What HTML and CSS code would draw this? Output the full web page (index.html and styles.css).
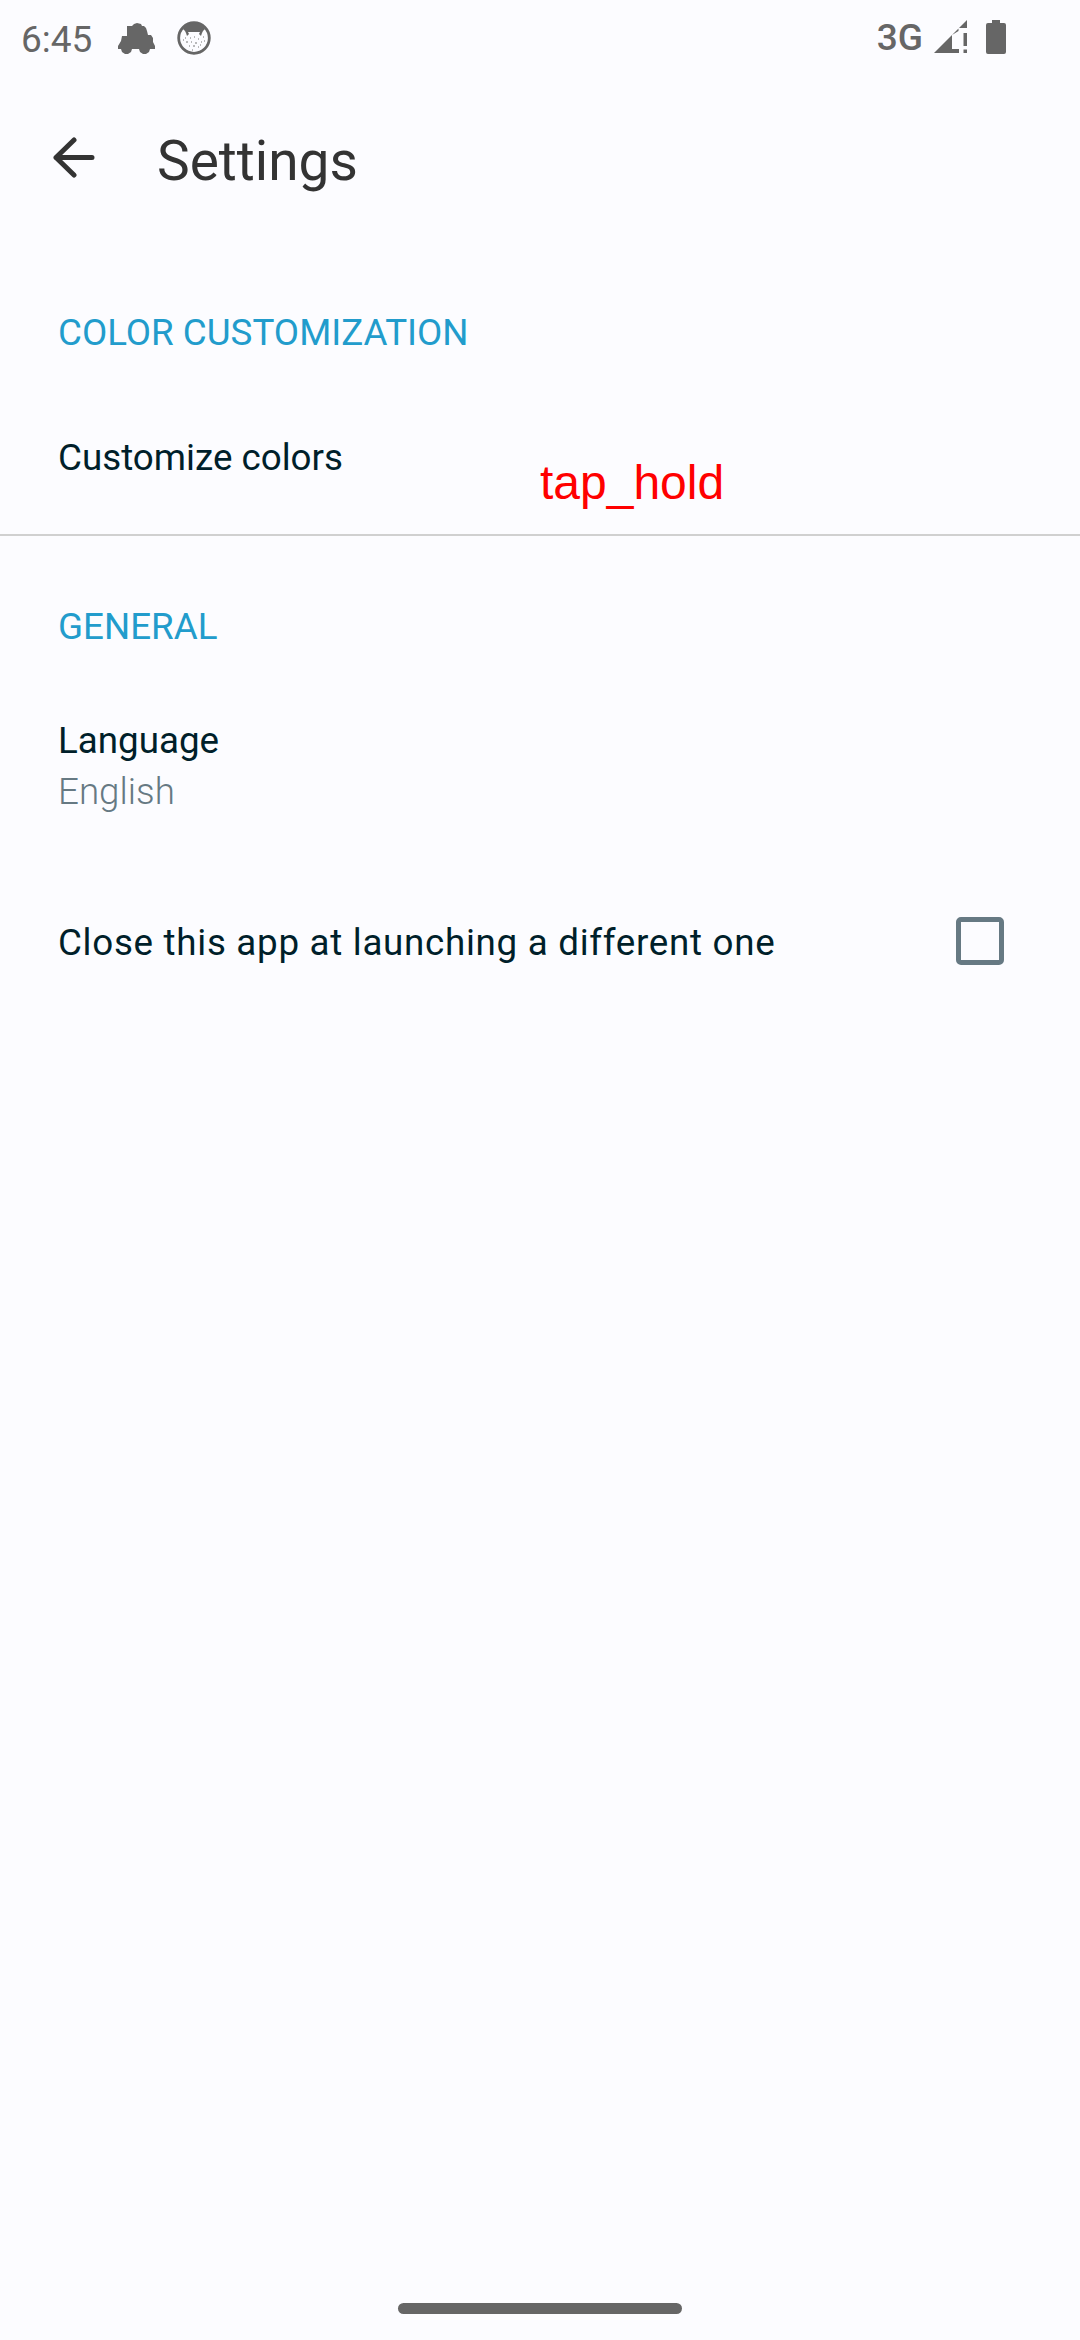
FILE: index.html
```html
<!DOCTYPE html>
<html lang="en">
<head>
<meta charset="utf-8">
<title>Settings</title>
<link rel="stylesheet" href="styles.css">
</head>
<body>
<div class="screen">
  <header class="status">
    <span class="clock">6:45</span>
    <svg class="car" width="38" height="31" viewBox="0 0 38 31"><path d="M9 3h5l2-2 3-1 4 1 1 2h2l2 2 1 3 1 4h3l2 3v4l2 4v3h-5l-1 3-3 2h-3l-3-2-1-3h-7l-1 3-3 2H7l-3-2-1-3H0v-3l3-5 1-5h5z"/></svg>
    <svg class="face" width="34" height="34" viewBox="0 0 34 34"><circle class="ring" cx="17" cy="17" r="15.3"/><path d="M6 8C9 3 13 2 17 2s8 1 11 6l-2 2-1 2-1 3-2-2 1-2H11l1 2-2 2-1-3-1-2z"/><path class="dots" d="M8 17h1M13 17h1M17 16h1M21 18h1M26 16h1M9 21h2M14 21h1M18 22h2M24 21h1M12 25h1M16 25h2M21 26h1M15 29h1M6 19h1M23 24h1M27 20h1"/></svg>
    <span class="network">3G</span>
    <svg class="signal" width="33" height="33" viewBox="0 0 33 33"><path d="M33 0v8h-8zM0 33l24.5-24.5V11L18 15v14h7v4zM29.5 13h3.5v13h-3.5zM29.5 29.5h3.5V33h-3.5z"/></svg>
    <svg class="battery" width="20" height="34" viewBox="0 0 20 34"><path d="M6 0h8v3h4q2 0 2 2v27q0 2-2 2H2q-2 0-2-2V5q0-2 2-2h4z"/></svg>
  </header>
  <nav class="toolbar">
    <svg class="back" width="42" height="42" viewBox="0 0 42 42"><path d="M21 3L3 20.5 21 38M3 20.5h36"/></svg>
    <h1 class="title">Settings</h1>
  </nav>
  <main>
    <section class="group colors">
      <h2 class="heading">COLOR CUSTOMIZATION</h2>
      <div class="row customize"><span class="label">Customize colors</span><span class="gesture">tap_hold</span></div>
    </section>
    <section class="group general">
      <h2 class="heading">GENERAL</h2>
      <div class="row language">
        <div class="label">Language</div>
        <div class="value">English</div>
      </div>
      <div class="row toggle"><span class="long">Close this app at launching a different one</span><span class="checkbox"></span></div>
    </section>
  </main>
  <footer class="home"></footer>
</div>
</body>
</html>
```
FILE: styles.css
```css
body {
  margin: 0;
  background: #fcfcff;
  font-family: Roboto, sans-serif;
}

.screen {
  width: 1080px;
  height: 2340px;
  display: flex;
  flex-direction: column;
}

.status {
  height: 80px;
  box-sizing: border-box;
  padding: 0 74px 0 21px;
  display: flex;
  align-items: flex-start;
  color: #666;
  fill: #666;
}

.clock {
  width: 97px;
  padding-top: 18px;
  font-size: 37px;
  line-height: 43px;
}

.car { margin-top: 23px; }

.face { margin: 21px 0 0 21px; }

.ring { fill: none; stroke: #666; stroke-width: 2.8; }

.dots { fill: none; stroke: #777; stroke-width: 1; }

.network {
  margin-left: auto;
  padding-top: 16px;
  font-size: 37px;
  font-weight: 500;
  line-height: 43px;
}

.signal { margin: 20px 19px 0 11px; }

.battery { margin-top: 20px; }

.toolbar {
  height: 160px;
  display: flex;
  align-items: center;
  padding-left: 53px;
}

.back {
  margin-bottom: 4px;
  fill: none;
  stroke: #333;
  stroke-width: 5;
  stroke-linecap: round;
  stroke-linejoin: round;
}

.title {
  margin: 2px 0 0 62px;
  font-size: 55px;
  font-weight: 400;
  line-height: 64px;
  color: #333;
}

.group { padding: 0 58px; }

.colors {
  height: 296px;
  box-sizing: border-box;
  padding-top: 71px;
  border-bottom: 2px solid #d0d0d0;
}

.general { padding-top: 69px; }

.heading {
  margin: 0;
  font-size: 36.75px;
  font-weight: 400;
  line-height: 43px;
  color: #229ccc;
}

.row { color: #001f2a; font-size: 36.75px; line-height: 43px; }

.customize { display: flex; padding-top: 82px; }

.customize .label { width: 482px; }

.gesture {
  margin-top: 25px;
  font-family: "Liberation Sans", sans-serif;
  font-size: 48px;
  color: #f00;
}

.language { padding-top: 71px; }

.value { margin-top: 8px; font-weight: 300; color: #667983; }

.toggle {
  display: flex;
  justify-content: space-between;
  align-items: center;
  padding: 104px 18px 0 0;
}

.long { margin-top: 3px; letter-spacing: 0.7px; }

.checkbox {
  width: 48px;
  height: 48px;
  box-sizing: border-box;
  border: 5px solid #667983;
  border-radius: 5px;
}

.home {
  width: 284px;
  height: 11px;
  margin: auto auto 26px;
  border-radius: 6px;
  background: #666;
}
```
